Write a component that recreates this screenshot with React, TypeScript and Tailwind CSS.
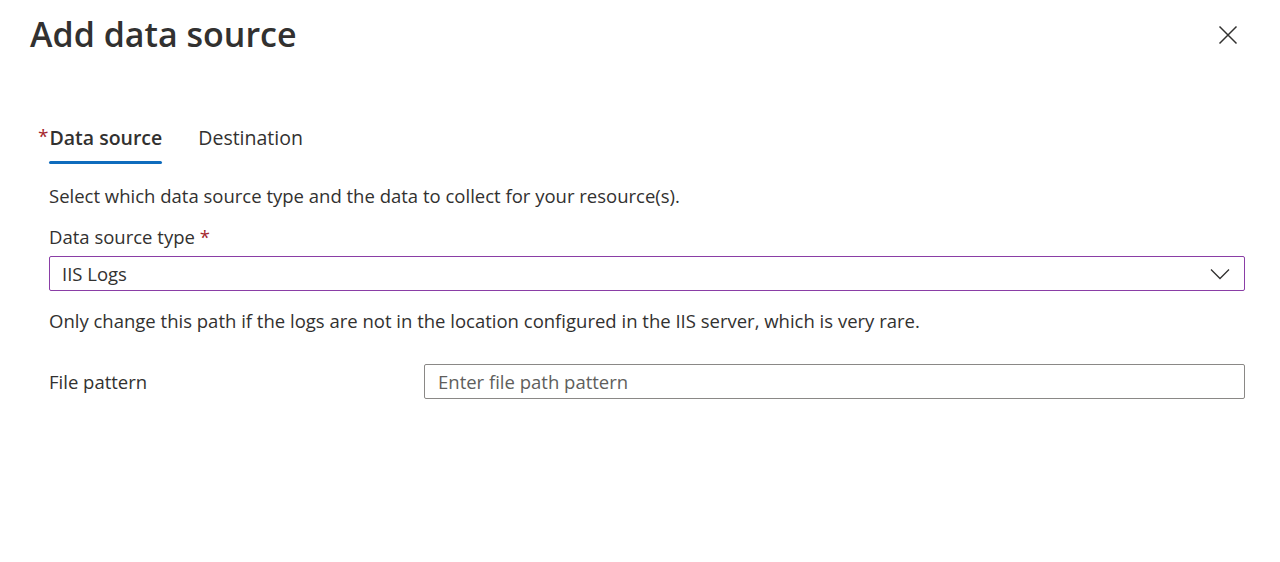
export default function App() {
  return (
    <div className="w-[1280px] h-[562px] bg-white text-[#323130] font-['Open_Sans',sans-serif] overflow-hidden">
      {/* header */}
      <div className="flex items-start justify-between pl-[30px] pr-[42px] pt-[12px]">
        <h1 className="text-[34px] leading-[44px] font-semibold">Add data source</h1>
        <button className="mt-[13px] text-[#323130]">
          <svg width="20" height="20" viewBox="0 0 20 20" fill="none" stroke="currentColor" strokeWidth="1.5">
            <path d="M1.5 1.5L18.5 18.5M18.5 1.5L1.5 18.5" />
          </svg>
        </button>
      </div>

      {/* tabs */}
      <div className="flex items-start gap-[36px] pl-[38px] mt-[68px]">
        <div className="flex items-start">
          <span className="text-[#a4262c] text-[19px] leading-[24px] mr-[1px]">*</span>
          <div className="flex flex-col">
            <span className="text-[19.5px] leading-[28px] font-semibold">Data source</span>
            <div className="mt-[9px] h-[3px] bg-[#0f6cbd] rounded-sm" />
          </div>
        </div>
        <span className="text-[19.5px] leading-[28px]">Destination</span>
      </div>

      <div className="pl-[49px] pr-[35px]">
        <p className="mt-[20px] text-[18.5px] leading-[24px]">
          Select which data source type and the data to collect for your resource(s).
        </p>

        <label className="block mt-[17px] text-[18.5px] leading-[24px]">
          Data source type <span className="text-[#a4262c]">*</span>
        </label>
        <div className="mt-[7px] h-[35px] border border-[#8a3ea6] rounded-[2px] flex items-center justify-between pl-[12px] pr-[14px]">
          <span className="text-[18.5px]">IIS Logs</span>
          <svg width="20" height="12" viewBox="0 0 20 12" fill="none" stroke="#323130" strokeWidth="1.3">
            <path d="M1 1.5L10 10.5L19 1.5" />
          </svg>
        </div>

        <p className="mt-[18px] text-[18.5px] leading-[24px]">
          Only change this path if the logs are not in the location configured in the IIS server, which is very rare.
        </p>

        <div className="mt-[31px] flex items-center">
          <label className="w-[375px] shrink-0 text-[18.5px]">File pattern</label>
          <input
            className="flex-1 h-[35px] border border-[#8a8886] rounded-[2px] px-[13px] text-[18.5px] placeholder:text-[#605e5c] outline-none"
            placeholder="Enter file path pattern"
          />
        </div>
      </div>
    </div>
  )
}
